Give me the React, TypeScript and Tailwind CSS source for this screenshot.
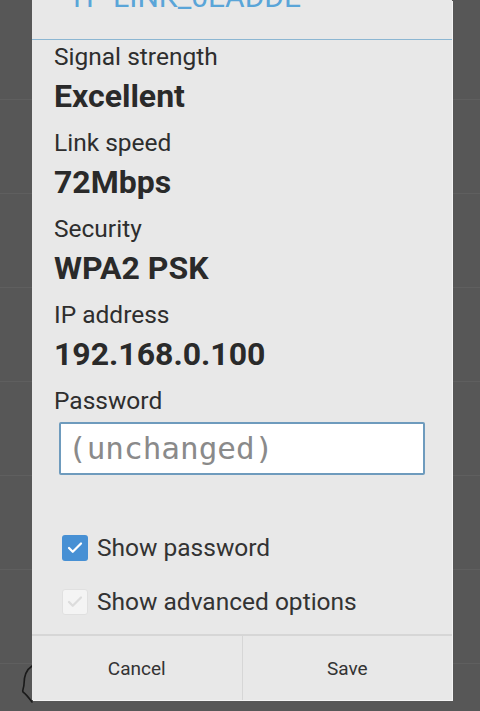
import { Check } from "lucide-react";

const details = [
  { label: "Signal strength", value: "Excellent" },
  { label: "Link speed", value: "72Mbps" },
  { label: "Security", value: "WPA2 PSK" },
  { label: "IP address", value: "192.168.0.100" },
];

export default function App() {
  return (
    <div
      className="relative h-[711px] w-[480px] overflow-hidden bg-[#575757]"
      style={{ fontFamily: "Roboto, 'Liberation Sans', sans-serif" }}
    >
      {/* list behind the dialog */}
      <div className="flex flex-col pt-[6px]">
        {Array.from({ length: 7 }).map((_, i) => (
          <div key={i} className="h-[94px] border-b border-[#5f5f5f]" />
        ))}
      </div>

      <svg
        className="absolute left-[18px] top-[660px]"
        width="20"
        height="44"
        viewBox="0 0 20 44"
        fill="none"
      >
        <path
          d="M14 6 C8 10 6 16 6 24 C6 28 4 30 5 32 C8 34 11 38 14 42"
          stroke="#1a1a1a"
          strokeWidth="1.6"
          strokeLinecap="round"
        />
      </svg>

      {/* dialog */}
      <div className="absolute left-[32px] top-0 flex h-[700px] w-[420px] flex-col bg-[#e8e8e8] shadow-[1px_1px_0_#f4f4f4]">
        <div className="h-[40px] border-b-[1.5px] border-[#8cb6d2] pl-[36px]">
          <div className="-mt-[18px] text-[30px] leading-[30px] text-[#5aa5d8]">
            TP-LINK_0EADDE
          </div>
        </div>

        <div className="flex flex-col pl-[22px] pt-[2px]">
          {details.map((d) => (
            <div key={d.label} className="mb-[8px] flex flex-col">
              <div className="h-[30px] text-[24.5px] leading-[30px] text-[#2e2e2e]">
                {d.label}
              </div>
              <div className="h-[48px] text-[32px] font-bold leading-[48px] text-[#2a2a2a]">
                {d.value}
              </div>
            </div>
          ))}
          <div className="h-[30px] text-[24.5px] leading-[30px] text-[#2e2e2e]">
            Password
          </div>
        </div>

        <div className="ml-[27px] mt-[6px] flex h-[53px] w-[366px] items-center rounded-[2px] border-2 border-[#6e9bbd] bg-white pl-[7px]">
          <span
            className="text-[31px] text-[#8a8a8a]"
            style={{ fontFamily: "'DejaVu Sans Mono', 'Liberation Mono', monospace" }}
          >
            (unchanged)
          </span>
        </div>

        <div className="mt-[46px] flex flex-col pl-[30px]">
          <div className="flex h-[54px] items-center gap-[9px]">
            <div className="flex h-[26px] w-[26px] items-center justify-center rounded-[3px] bg-[#4790d4]">
              <Check className="h-[18px] w-[18px] text-white" strokeWidth={3} />
            </div>
            <span className="text-[24.5px] text-[#333333]">Show password</span>
          </div>
          <div className="flex h-[54px] items-center gap-[9px]">
            <div className="flex h-[26px] w-[26px] items-center justify-center rounded-[3px] border border-[#e0e0e0] bg-[#f4f4f4]">
              <Check className="h-[18px] w-[18px] text-[#dcdcdc]" strokeWidth={3} />
            </div>
            <span className="text-[24.5px] text-[#333333]">Show advanced options</span>
          </div>
        </div>

        <div className="mt-auto flex h-[66px] border-t-2 border-[#d6d6d6]">
          <div className="flex flex-1 items-center justify-center border-r border-[#d6d6d6] pt-[3px] text-[19px] text-[#333333]">
            Cancel
          </div>
          <div className="flex flex-1 items-center justify-center pt-[3px] text-[19px] text-[#333333]">
            Save
          </div>
        </div>
      </div>
    </div>
  );
}
